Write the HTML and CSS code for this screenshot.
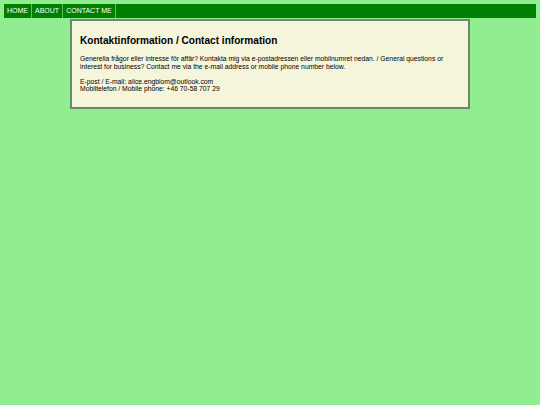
FILE: index.html
```html
<!DOCTYPE html>
<html lang="sv">
<head>
<meta charset="utf-8">
<title>Kontakt</title>
<link rel="stylesheet" href="styles.css">
</head>
<body>
<nav class="topnav">
  <a class="navlink" href="#">HOME</a>
  <a class="navlink" href="#">ABOUT</a>
  <a class="navlink" href="#">CONTACT ME</a>
</nav>
<main class="card">
  <h2 class="card-title">Kontaktinformation / Contact information</h2>
  <p class="card-text">Generella frågor eller intresse för affär? Kontakta mig via e-postadressen eller mobilnumret nedan. / General questions or interest for business? Contact me via the e-mail address or mobile phone number below.</p>
  <p class="card-text">E-post / E-mail: alice.engblom@outlook.com<br>Mobiltelefon / Mobile phone: +46 70-58 707 29</p>
</main>
</body>
</html>
```

FILE: styles.css
```css
html, body {
  margin: 0;
  padding: 0;
}
body {
  background: #90ee90;
  font-family: "Liberation Sans", Arial, sans-serif;
  padding: 4px;
}
.topnav {
  display: flex;
  background: #008000;
  height: 14px;
}
.navlink {
  display: block;
  color: #ffffff;
  text-decoration: none;
  font-size: 7px;
  line-height: 14px;
  padding: 0 3px;
  border-right: 1px solid #5fbf5f;
}
.card {
  width: 380px;
  margin: 1px auto 0;
  padding: 8px 8px 7px;
  background: #f5f5dc;
  border: 2px solid #6b8a6b;
}
.card-title {
  font-size: 10.1px;
  line-height: 11.5px;
  margin: 6px 0 8.5px;
}
.card-text {
  font-size: 6.78px;
  line-height: 7.7px;
  margin: 0 0 7.3px;
}
```
